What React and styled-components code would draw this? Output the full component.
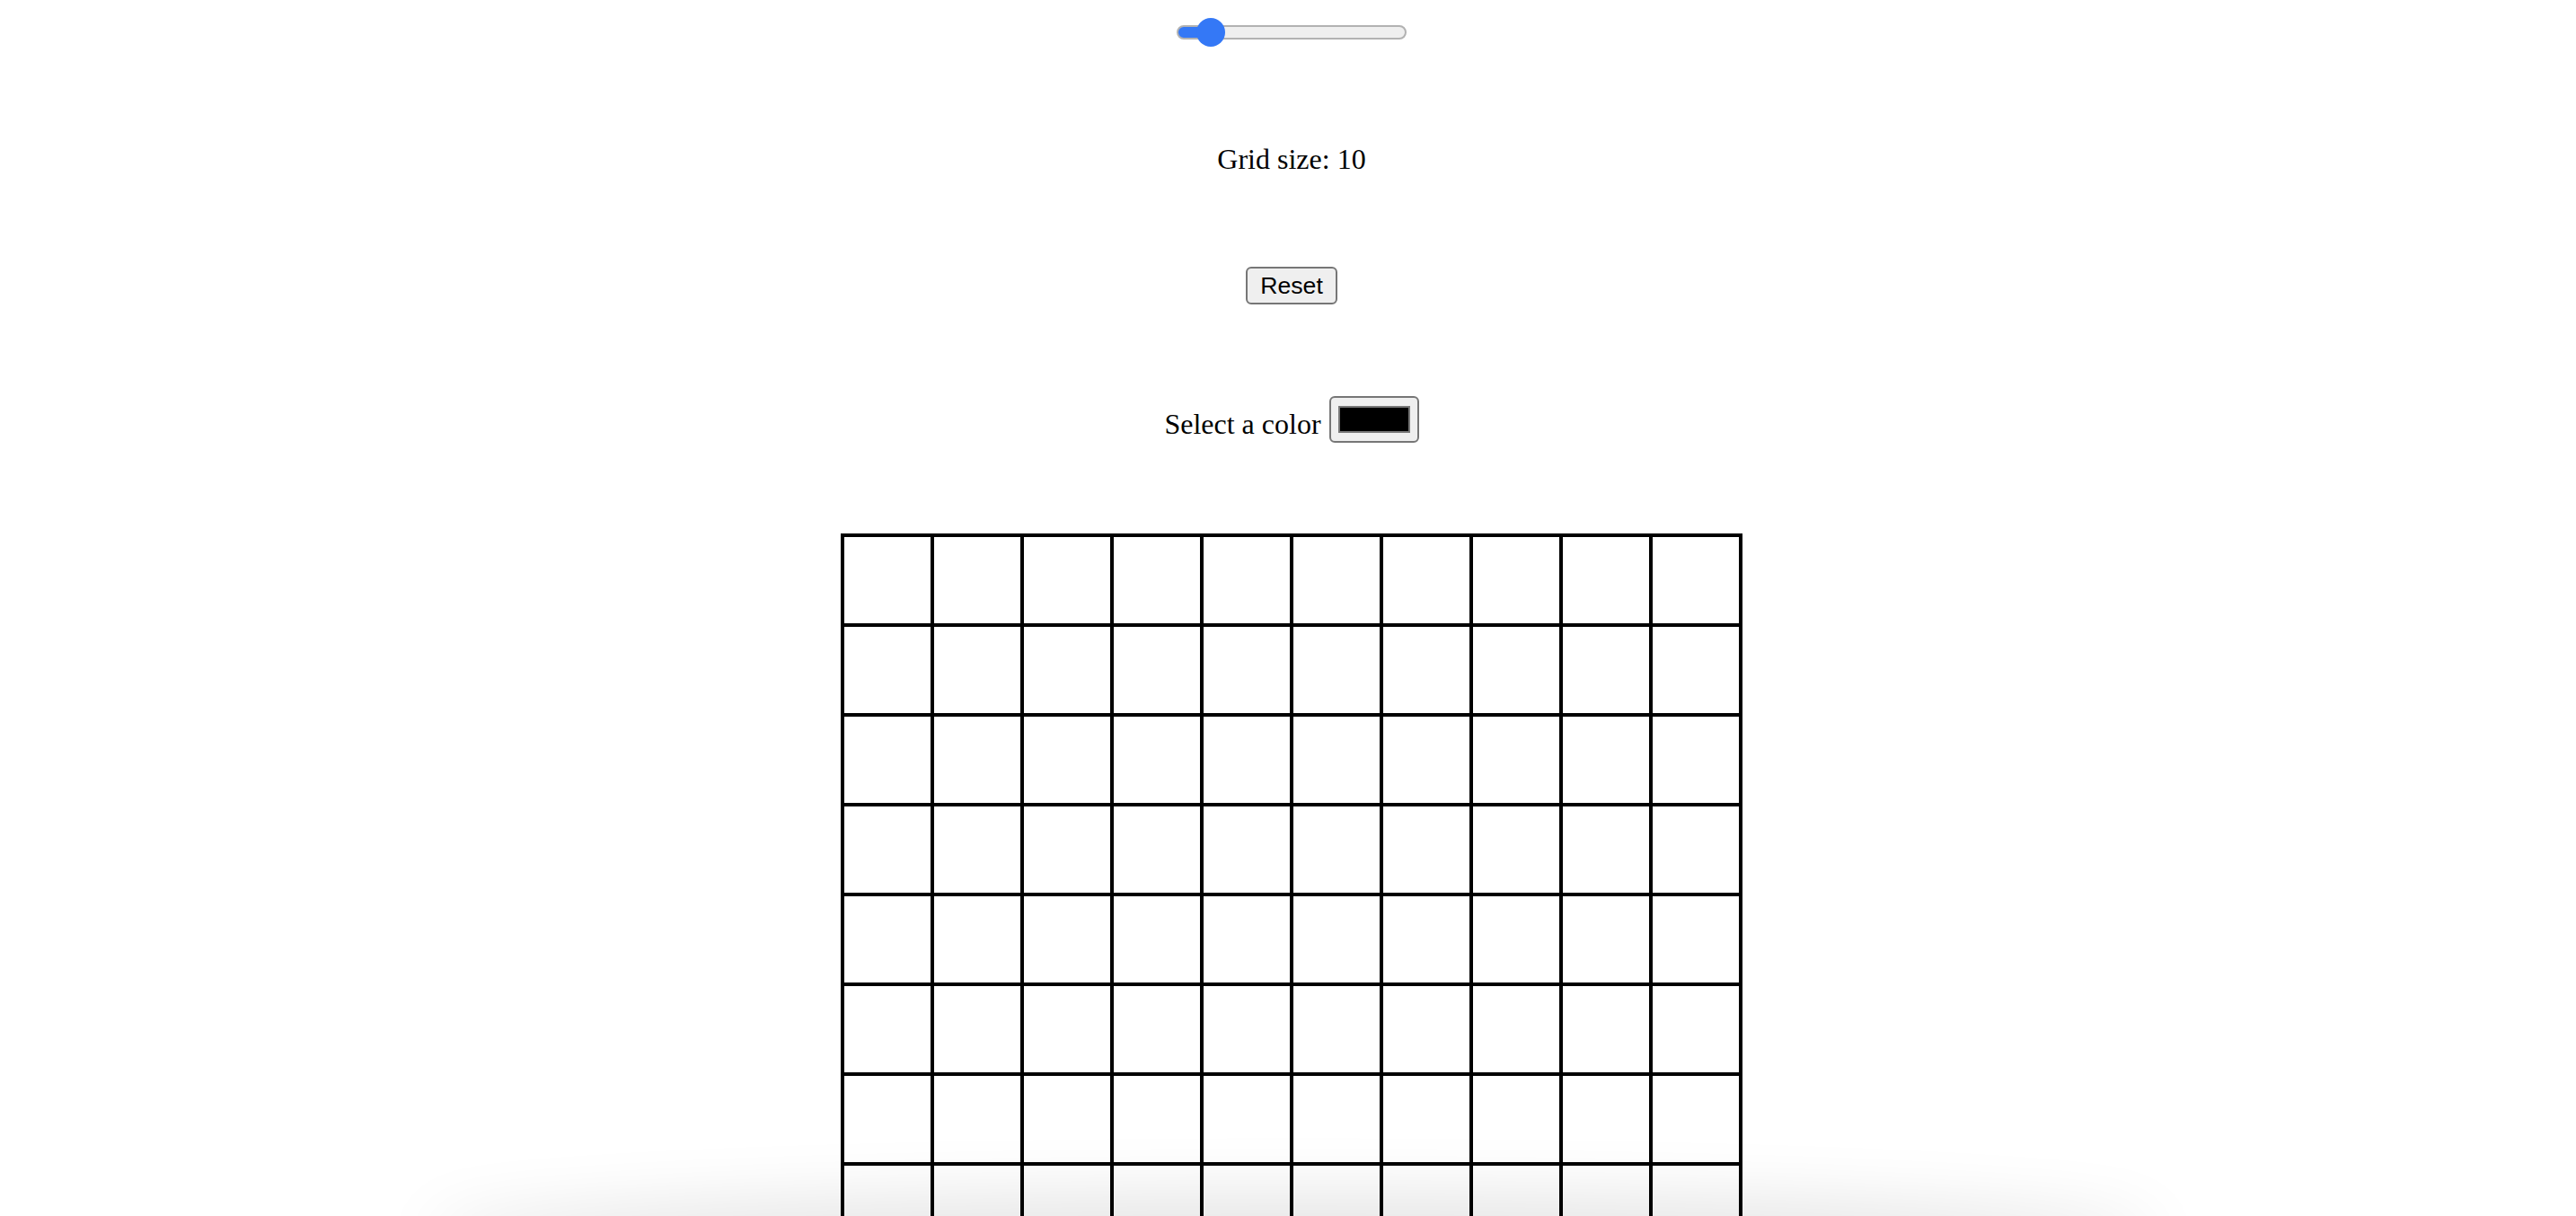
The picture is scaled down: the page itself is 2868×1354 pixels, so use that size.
import React, { useState } from 'react';
import styled, { createGlobalStyle } from 'styled-components';

const GlobalStyle = createGlobalStyle`
  body {
    margin: 0;
    background: #fff;
    color: #000;
    font-family: "Liberation Serif", "Times New Roman", serif;
  }
`;

const Page = styled.div`
  position: relative;
  height: 100vh;
  overflow: hidden;
  box-sizing: border-box;
  padding: 20px 0 0 8px;
  display: flex;
  flex-direction: column;
  align-items: center;
  gap: 100px;

  & > * {
    flex-shrink: 0;
  }
`;

const Slider = styled.input.attrs({ type: 'range' })`
  -webkit-appearance: none;
  appearance: none;
  width: 256px;
  height: 32px;
  margin: 0;
  background: transparent;

  &::-webkit-slider-runnable-track {
    height: 16px;
    box-sizing: border-box;
    border: 2px solid #b2b2b2;
    border-radius: 8px;
    background: linear-gradient(
      to right,
      #3478f6 ${(p) => p.$fill}px,
      #efefef ${(p) => p.$fill}px
    );
  }

  &::-webkit-slider-thumb {
    -webkit-appearance: none;
    width: 32px;
    height: 32px;
    margin-top: -10px;
    border: none;
    border-radius: 50%;
    background: #3478f6;
  }
`;

const SizeLabel = styled.div`
  margin-top: 7px;
  font-size: 32px;
  line-height: 37px;
`;

const ResetButton = styled.button`
  margin-top: 1px;
  height: 42px;
  padding: 0 14px;
  box-sizing: border-box;
  border: 2px solid #767676;
  border-radius: 6px;
  background: #efefef;
  color: #000;
  font-family: "Liberation Sans", Arial, sans-serif;
  font-size: 26.67px;
  cursor: pointer;
`;

const ColorRow = styled.label`
  margin-top: 2px;
  display: flex;
  align-items: center;
  gap: 9px;
  font-size: 32px;
`;

const ColorText = styled.span`
  line-height: 37px;
  padding-top: 10px;
`;

const ColorInput = styled.input.attrs({ type: 'color' })`
  width: 100px;
  height: 52px;
  margin: 0;
  padding: 0;
  box-sizing: border-box;
  border: 2px solid #767676;
  border-radius: 6px;
  background: #efefef;
  cursor: pointer;

  &::-webkit-color-swatch-wrapper {
    padding: 9px 8px;
  }

  &::-webkit-color-swatch {
    border: 2px solid #777;
    border-radius: 0;
  }
`;

const Board = styled.div`
  margin-top: 1px;
  display: grid;
  grid-template-columns: repeat(${(p) => p.$size}, 1fr);
  grid-template-rows: repeat(${(p) => p.$size}, 1fr);
  width: 1000px;
  height: 1000px;
  border: 2px solid #000;
`;

const Cell = styled.div`
  box-sizing: border-box;
  border: 2px solid #000;
  background: ${(p) => p.$color || '#fff'};
  cursor: pointer;
`;

const Shade = styled.div`
  position: absolute;
  left: 500px;
  width: 1880px;
  bottom: -40px;
  height: 40px;
  border-radius: 50%;
  box-shadow: 0 0 70px 26px rgba(0, 0, 0, 0.1);
  pointer-events: none;
`;

export default function App() {
  const [size, setSize] = useState(10);
  const [color, setColor] = useState('#000000');
  const [painted, setPainted] = useState({});

  const frac = (size - 1) / 99;
  const fill = 16 + 224 * frac - 2;

  const cells = [];
  for (let i = 0; i < size * size; i++) {
    cells.push(
      <Cell
        key={i}
        $color={painted[i]}
        onClick={() => setPainted((prev) => ({ ...prev, [i]: color }))}
      />
    );
  }

  return (
    <>
      <GlobalStyle />
      <Page>
        <Slider
          min={1}
          max={100}
          value={size}
          $fill={fill}
          onChange={(e) => {
            setSize(Number(e.target.value));
            setPainted({});
          }}
        />
        <SizeLabel>Grid size: {size}</SizeLabel>
        <ResetButton onClick={() => setPainted({})}>Reset</ResetButton>
        <ColorRow>
          <ColorText>Select a color</ColorText>
          <ColorInput value={color} onChange={(e) => setColor(e.target.value)} />
        </ColorRow>
        <Board $size={size}>{cells}</Board>
        <Shade />
      </Page>
    </>
  );
}
